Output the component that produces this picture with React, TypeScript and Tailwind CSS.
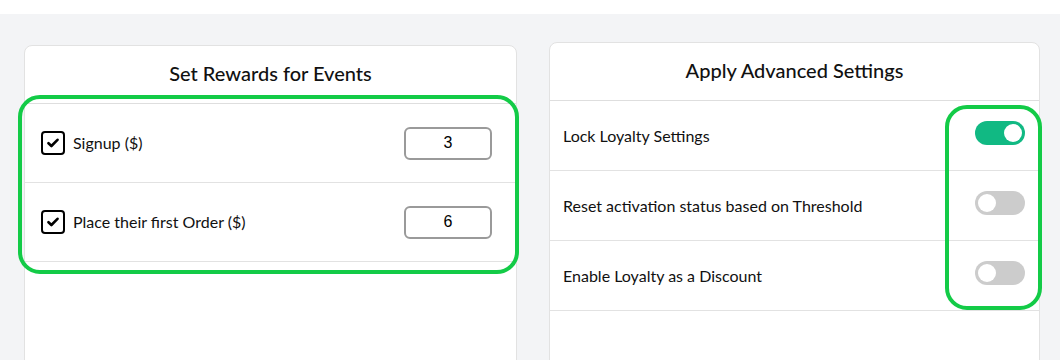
import { useState } from 'react'

const FONT = { fontFamily: 'Lato, "Noto Sans", sans-serif' }

type Reward = { label: string; value: number; checked: boolean }

const REWARDS: Reward[] = [
  { label: 'Signup ($)', value: 3, checked: true },
  { label: 'Place their first Order ($)', value: 6, checked: true },
]

const SETTINGS = [
  { label: 'Lock Loyalty Settings', on: true },
  { label: 'Reset activation status based on Threshold', on: false },
  { label: 'Enable Loyalty as a Discount', on: false },
]

function CheckBox({ checked }: { checked: boolean }) {
  return (
    <span className="flex h-6 w-6 shrink-0 items-center justify-center rounded-[4px] border-2 border-black bg-white">
      {checked && (
        <svg width="12" height="10" viewBox="0 0 12 10" fill="none">
          <path d="M1.5 5.2 4.4 8 10.5 1.8" stroke="#000" strokeWidth="2.6" strokeLinecap="round" strokeLinejoin="round" />
        </svg>
      )}
    </span>
  )
}

function Toggle({ on, onClick }: { on: boolean; onClick: () => void }) {
  return (
    <button
      onClick={onClick}
      className={`relative h-6 w-[50px] shrink-0 rounded-full ${on ? 'bg-[#11b983]' : 'bg-[#cccccc]'}`}
    >
      <span
        className={`absolute top-[3px] h-[18px] w-[18px] rounded-full bg-white ${on ? 'right-[3px]' : 'left-[3px]'}`}
      />
    </button>
  )
}

export default function App() {
  const [settings, setSettings] = useState(SETTINGS)

  return (
    <div className="min-h-screen bg-white pt-[14px]" style={FONT}>
      <div className="grid h-[346px] grid-cols-[493px_491px] gap-8 overflow-hidden bg-[#f3f4f6] pl-6 pt-7">
        {/* rewards card */}
        <div className="relative mt-[3px] h-[400px] rounded-lg border border-[#e2e2e2] bg-white">
          <div className="flex h-[58px] items-center justify-center border-b border-[#dedede] pb-[4px] text-[20px] font-medium text-[#111]">
            Set Rewards for Events
          </div>
          {REWARDS.map((r) => (
            <div key={r.label} className="flex h-[79px] items-center border-b border-[#e2e2e2] pl-4 pr-6">
              <CheckBox checked={r.checked} />
              <span className="ml-2 text-[16px] text-[#111]">{r.label}</span>
              <input
                readOnly
                value={r.value}
                className="ml-auto h-[33px] w-[88px] rounded-[6px] border-2 border-[#9a9a9a] text-center text-[16px] text-black outline-none"
                style={{ fontFamily: '"Liberation Sans", Arial, sans-serif' }}
              />
            </div>
          ))}
          <div className="pointer-events-none absolute left-[-7px] top-[49px] h-[179px] w-[501px] rounded-[22px] border-4 border-[#13cb47]" />
        </div>

        {/* advanced settings card */}
        <div className="relative h-[400px] rounded-lg border border-[#e2e2e2] bg-white">
          <div className="flex h-[58px] items-center justify-center border-b border-[#dedede] pb-[4px] text-[20px] font-medium text-[#111]">
            Apply Advanced Settings
          </div>
          {settings.map((s, i) => (
            <div key={s.label} className="flex h-[70px] items-center border-b border-[#e2e2e2] pl-[13px] pr-[14px]">
              <span className="text-[16px] text-[#111]">{s.label}</span>
              <span className="ml-auto">
                <Toggle
                  on={s.on}
                  onClick={() => setSettings(settings.map((x, j) => (j === i ? { ...x, on: !x.on } : x)))}
                />
              </span>
            </div>
          ))}
          <div className="pointer-events-none absolute right-[-3px] top-[62px] h-[205px] w-[97px] rounded-[22px] border-4 border-[#13cb47]" />
        </div>
      </div>
    </div>
  )
}
